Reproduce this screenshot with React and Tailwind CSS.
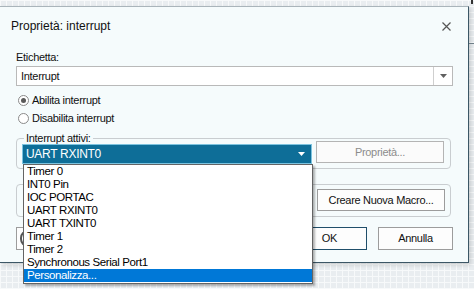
import React from "react";

const items = [
  "Timer 0",
  "INT0 Pin",
  "IOC PORTAC",
  "UART RXINT0",
  "UART TXINT0",
  "Timer 1",
  "Timer 2",
  "Synchronous Serial Port1",
  "Personalizza...",
];

const Caret = ({ color = "#606060" }) => (
  <svg width="7" height="4" viewBox="0 0 7 4">
    <path d="M0 0h7L3.5 4z" fill={color} />
  </svg>
);

const App = () => {
  return (
    <div
      className="relative w-[474px] h-[289px] overflow-hidden pt-[6px] bg-[#e9edf0] bg-[linear-gradient(90deg,#f7f9fa_1px,transparent_1px),linear-gradient(#f7f9fa_1px,transparent_1px)] bg-[size:6px_6px] text-[#111]"
      style={{ fontFamily: '"Liberation Sans", Arial, sans-serif' }}
    >
      {/* Dialog window */}
      <div className="w-[469px] h-[257px] bg-[#f5fbfc] border-t border-t-[#a9b4ba] border-r border-r-[#3c5766] border-b border-b-[#3c5766] shadow-[2px_2px_4px_rgba(0,0,0,0.15)] flex flex-col">
        {/* Title bar */}
        <div className="h-[38px] flex items-center justify-between pl-[11px] pr-[17px]">
          <span className="text-[12px]">Proprietà: interrupt</span>
          <svg width="9" height="9" viewBox="0 0 9 9">
            <path d="M0.5 0.5l8 8M8.5 0.5l-8 8" stroke="#555" strokeWidth="1.2" />
          </svg>
        </div>

        <div className="pl-[16px] pr-[15px] flex flex-col text-[11px] tracking-[-0.3px]">
          <div className="mt-[5px] h-[14px] leading-[14px]">Etichetta:</div>
          <div className="mt-[2px] h-[20px] w-[437px] flex bg-white border border-[#b9b9b9]">
            <div className="flex-1 flex items-center pl-[4px]">Interrupt</div>
            <div className="w-[19px] border-l border-[#cfcfcf] flex items-center justify-center">
              <Caret />
            </div>
          </div>

          {/* Radios */}
          <div className="mt-[5px] h-[18px] flex items-center gap-[3px] pl-[2px]">
            <span className="w-[11px] h-[11px] rounded-full border border-[#8a8a8a] bg-white flex items-center justify-center">
              <span className="w-[5px] h-[5px] rounded-full bg-[#5a5a5a]" />
            </span>
            <span>Abilita interrupt</span>
          </div>
          <div className="h-[18px] flex items-center gap-[3px] pl-[2px]">
            <span className="w-[11px] h-[11px] rounded-full border border-[#8a8a8a] bg-white" />
            <span>Disabilita interrupt</span>
          </div>

          {/* Group: Interrupt attivi */}
          <div className="relative mt-[11px] h-[31px] w-[435px] border border-[#c9cdd0] rounded-[4px] flex items-start">
            <span className="absolute -top-[7px] left-[7px] px-[2px] bg-[#f5fbfc] leading-[12px]">Interrupt attivi:</span>
            <div className="ml-[5px] mt-[5px] w-[290px] h-[20px] bg-[#0e6e98] border border-[#7cc3df] text-white text-[12px] tracking-[-0.3px] flex items-center justify-between pl-[3px] pr-[6px]">
              <span>UART RXINT0</span>
              <Caret color="#ffffff" />
            </div>
            <div className="ml-[4px] mt-[2px] w-[128px] h-[22px] border border-[#b4b4b4] bg-[#fbfbfb] text-[#8c8c8c] flex items-center justify-center">
              Proprietà...
            </div>
          </div>

          {/* Group: macro */}
          <div className="mt-[15px] h-[33px] w-[435px] border border-[#c9cdd0] rounded-[4px] flex justify-end pr-[5px]">
            <div className="mt-[4px] w-[128px] h-[22px] border border-[#9c9c9c] bg-[#fdfdfd] flex items-center justify-center">
              Creare Nuova Macro...
            </div>
          </div>

          {/* Buttons */}
          <div className="mt-[10px] h-[23px] flex items-stretch">
            <div className="w-[75px] border border-[#9c9c9c] bg-[#fdfdfd] flex items-center pl-[3px]">
              <span className="w-[16px] h-[17px] rounded-full border-2 border-[#555]" />
            </div>
            <div className="ml-auto w-[75px] border border-[#1f4e6a] bg-[#fdfdfd] flex items-center justify-center">
              OK
            </div>
            <div className="ml-[11px] w-[75px] border border-[#9c9c9c] bg-[#fdfdfd] flex items-center justify-center">
              Annulla
            </div>
          </div>
        </div>
      </div>

      {/* Dropdown list */}
      <div className="absolute left-[23px] top-[164px] w-[290px] h-[120px] bg-white border border-[#646464] shadow-[2px_2px_2px_rgba(0,0,0,0.3)] text-[11.5px] tracking-[-0.4px] text-black">
        {items.map((it, i) => (
          <div
            key={i}
            className={
              i === items.length - 1
                ? "h-[13px] leading-[13px] pl-[3px] bg-[#0078d7] text-white"
                : "h-[13px] leading-[13px] pl-[3px]"
            }
          >
            {it}
          </div>
        ))}
      </div>

      {/* edge line of the window behind */}
      <div className="absolute right-0 top-[43px] w-[5px] h-px bg-[#6f7f88]" />
      <div className="absolute right-[1px] top-0 w-[2px] h-[4px] bg-[#333]" />
    </div>
  );
};

export default App;
